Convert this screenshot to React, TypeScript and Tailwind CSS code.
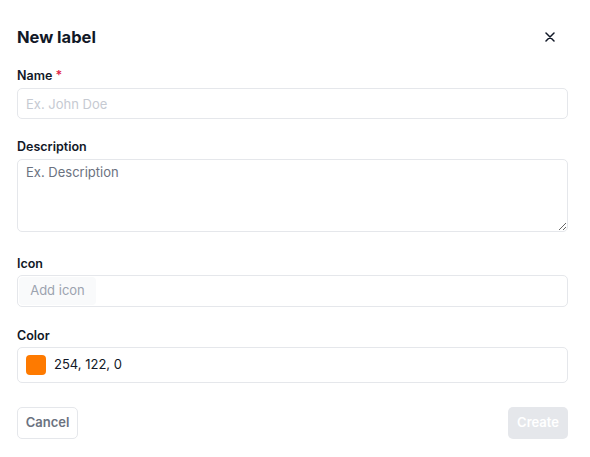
import React from "react";

export default function App() {
  return (
    <div className="w-[590px] h-[457px] bg-white" style={{ fontFamily: "Inter, 'Noto Sans', sans-serif" }}>
      <div className="pl-[17px] pr-[22px] pt-[24px]">
        <div className="flex items-center justify-between h-[26px]">
          <h2 className="text-[16.5px] leading-[26px] font-bold text-[#111827]">New label</h2>
          <button className="w-[24px] h-[24px] flex items-center justify-center mr-[6px] text-[#111827]">
            <svg width="10" height="10" viewBox="0 0 10 10" fill="none" stroke="currentColor" strokeWidth="1.5" strokeLinecap="round">
              <path d="M1 1L9 9M9 1L1 9" />
            </svg>
          </button>
        </div>

        <div className="mt-[18px] flex flex-col">
          <label className="text-[12.5px] leading-[16px] font-semibold text-[#111827]">
            Name <span className="text-[#e11d48]">*</span>
          </label>
          <input
            className="mt-[4px] h-[31px] w-full rounded-[5px] border border-[#e5e7eb] px-[8px] text-[13px] text-[#111827] placeholder:text-[#c6cad2] outline-none"
            placeholder="Ex. John Doe"
          />
        </div>

        <div className="mt-[20px] flex flex-col">
          <label className="text-[12.5px] leading-[16px] font-semibold text-[#111827]">Description</label>
          <textarea
            className="mt-[4px] block h-[73px] w-full rounded-[5px] border border-[#e5e7eb] px-[8px] py-[2px] text-[13px] leading-[20px] text-[#111827] placeholder:text-[#6b7280] outline-none resize-y"
            placeholder="Ex. Description"
          />
        </div>

        <div className="mt-[24px] flex flex-col">
          <label className="text-[12.5px] leading-[16px] font-semibold text-[#111827]">Icon</label>
          <div className="mt-[3px] h-[32px] w-full rounded-[5px] border border-[#e5e7eb] p-[1px] flex items-stretch">
            <button className="w-[77px] rounded-[4px] bg-[#f9fafb] text-[13px] text-[#9ca3af]">Add icon</button>
          </div>
        </div>

        <div className="mt-[21px] flex flex-col">
          <label className="text-[12.5px] leading-[16px] font-semibold text-[#111827]">Color</label>
          <div className="mt-[3px] h-[36px] w-full rounded-[5px] border border-[#e5e7eb] px-[8px] flex items-center gap-[8px]">
            <div className="w-[20px] h-[20px] rounded-[4px] bg-[#fe7a00]" />
            <span className="text-[13px] text-[#111827]">254, 122, 0</span>
          </div>
        </div>

        <div className="mt-[24px] flex items-center justify-between">
          <button className="h-[32px] w-[61px] rounded-[5px] border border-[#e5e7eb] text-[13px] font-semibold text-[#6b7280]">
            Cancel
          </button>
          <button className="h-[32px] w-[60px] rounded-[5px] bg-[#e5e7eb] text-[13px] font-semibold text-white">
            Create
          </button>
        </div>
      </div>
    </div>
  );
}
